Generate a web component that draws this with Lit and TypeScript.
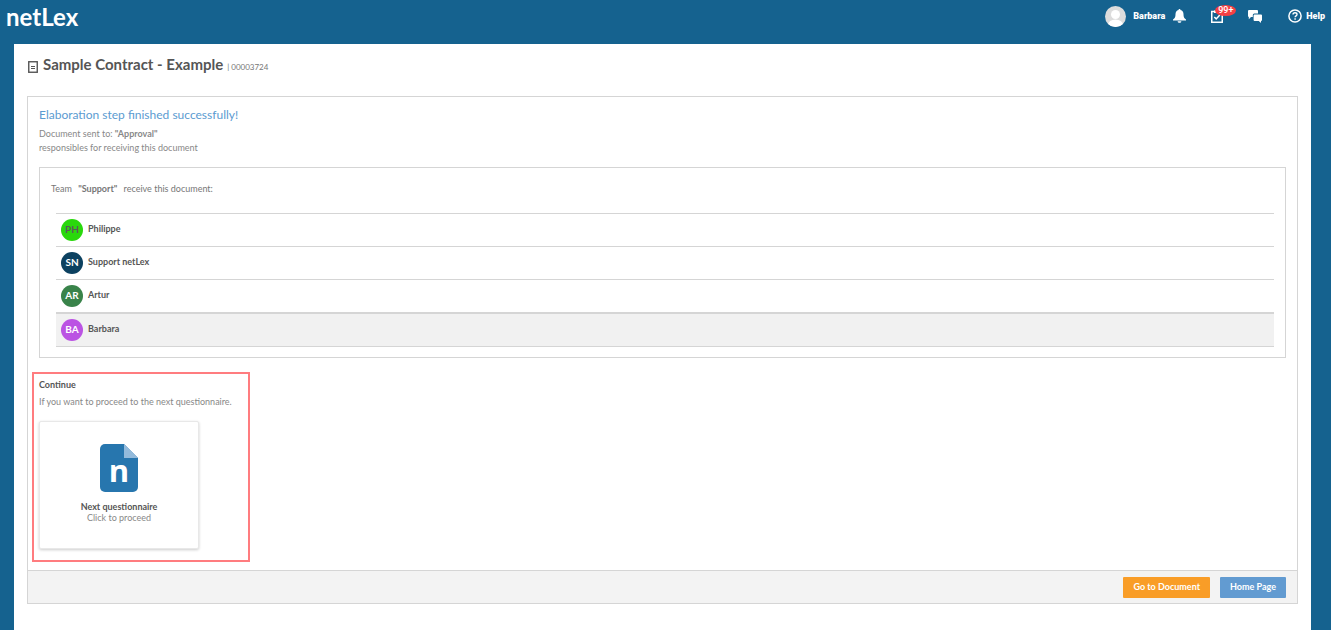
import { LitElement, css, html, svg } from 'lit'
import { customElement, property } from 'lit/decorators.js'
import { styleMap } from 'lit/directives/style-map.js'

interface Member {
    initials: string
    name: string
    color: string
    ink: string
    current?: boolean
}

const members: Member[] = [
    { initials: 'PH', name: 'Philippe', color: '#29d80c', ink: '#5a5a5a' },
    { initials: 'SN', name: 'Support netLex', color: '#0c4160', ink: '#fff' },
    { initials: 'AR', name: 'Artur', color: '#39834a', ink: '#fff' },
    { initials: 'BA', name: 'Barbara', color: '#bb53e3', ink: '#fff', current: true },
]

const documentMark = svg`
    <path fill="#2776ae" d="M5 0H24L38 14V43a5 5 0 0 1-5 5H5a5 5 0 0 1-5-5V5a5 5 0 0 1 5-5z"/>
    <path fill="#93badb" d="M24 0L38 14H24z"/>
`

@customElement('top-bar')
export class TopBar extends LitElement {
    @property() user = ''

    render() {
        return html`
      <header>
        <a class="logo" href="#">netLex</a>
        <nav>
            <a class="user" href="#">
                <svg width="21" height="21" viewBox="0 0 21 21"><defs><clipPath id="face"><circle cx="10.5" cy="10.5" r="10.5"/></clipPath></defs><g clip-path="url(#face)"><rect width="21" height="21" fill="#dcdcdc"/><circle cx="10.500" cy="8.500" r="4.500" fill="#fff"/><ellipse cx="10.500" cy="19" rx="7.500" ry="5.500" fill="#fff"/></g></svg>
                <span>${this.user}</span>
            </a>
            <button class="bell" aria-label="Notifications">
                <svg width="13" height="14" viewBox="0 0 13 14" fill="#fff"><path d="M6.500 0c.7 0 1 .4 1 1.100C9.500 1.600 10.500 3.200 10.500 5.200c0 2.800.6 4 2.500 5.300v.9H0v-.9C1.900 9.200 2.500 8 2.500 5.200c0-2 1-3.600 3-4.100C5.500.4 5.800 0 6.500 0z"/><path d="M4.600 12.200h3.800c-.2 1-.9 1.600-1.900 1.600s-1.700-.6-1.900-1.600z"/></svg>
            </button>
            <button class="tasks" aria-label="Tasks">
                <svg width="12" height="14" viewBox="0 0 12 14" fill="none" stroke="#fff"><rect x=".75" y="2.500" width="10.500" height="10.750" stroke-width="1.500"/><path fill="#fff" stroke="none" d="M3 1.500h2C5 .6 5.400.2 6 .2s1 .4 1 1.300h2V4H3z"/><path stroke-width="1.500" d="M3.300 8l1.900 1.900 3.600-3.800"/></svg>
                <span class="badge">99+</span>
            </button>
            <button class="chat" aria-label="Messages">
                <svg width="14" height="14" viewBox="0 0 14 14" fill="#fff"><path d="M1 1h8a1 1 0 0 1 1 1v2.500H6.300a1.500 1.500 0 0 0-1.500 1.500v2H3L.8 10.200V8H1a1 1 0 0 1-1-1V2a1 1 0 0 1 1-1z"/><path d="M6.600 5.500H13a1 1 0 0 1 1 1V11a1 1 0 0 1-1 1v2l-2.200-2H6.600a1 1 0 0 1-1-1V6.500a1 1 0 0 1 1-1z"/></svg>
            </button>
            <a class="help" href="#">
                <svg width="14" height="14" viewBox="0 0 14 14" fill="none" stroke="#fff"><circle cx="7" cy="7" r="6.100" stroke-width="1.500"/><path stroke-width="1.400" d="M5 5.600C5 4.400 5.800 3.700 7 3.700s2 .7 2 1.700c0 1.400-1.900 1.500-1.900 2.900"/><path stroke-width="1.400" d="M7.100 9.300v1.400"/></svg>
                <span>Help</span>
            </a>
        </nav>
      </header>
      `
    }

    static styles = css`
:host {
    display: block;
}

header {
    display: flex;
    justify-content: space-between;
    height: 44px;
    padding: 0 6px;
}

a {
    color: #fff;
    text-decoration: none;
}

.logo {
    font: 700 24px/34px Lato, "Open Sans", sans-serif;
}

nav {
    display: flex;
    align-items: center;
    height: 32px;
    font: 900 9px/14px Roboto, "Liberation Sans", sans-serif;
}

.user,
.help {
    display: flex;
    align-items: center;
}

.user {
    gap: 7px;
}

.help {
    gap: 4px;
    margin-left: 26px;
}

svg {
    display: block;
}

button {
    position: relative;
    padding: 0;
    border: 0;
    background: none;
    cursor: pointer;
}

.bell {
    margin-left: 8px;
}

.tasks {
    margin-left: 25px;
}

.chat {
    margin-left: 25px;
}

.badge {
    position: absolute;
    left: 4px;
    top: -4px;
    padding: 0 3px;
    border-radius: 50%;
    background: #f53f43;
    color: #fff;
    font: 500 9px/11px Roboto, "Liberation Sans", sans-serif;
}
    `
}

@customElement('team-list')
export class TeamList extends LitElement {
    @property() team = ''
    @property({ attribute: false }) members: Member[] = []

    render() {
        return html`
      <p>Team <b>"${this.team}"</b> receive this document:</p>
      <ul>
        ${this.members.map(m => html`
            <li class=${m.current ? 'current' : ''}>
                <span class="avatar" style=${styleMap({ background: m.color, color: m.ink })}>${m.initials}</span>
                <span class="name">${m.name}</span>
            </li>
        `)}
      </ul>
      `
    }

    static styles = css`
:host {
    display: block;
    padding: 14px 11px 10px;
    border: 1px solid #d5d5d5;
}

p {
    margin: 0 0 17px;
    color: #777;
    line-height: 14px;
}

p b {
    margin: 0 4px;
}

ul {
    margin: 0 0 0 5px;
    padding: 0;
    list-style: none;
}

li {
    display: flex;
    align-items: center;
    gap: 5px;
    height: 32px;
    padding: 0 5px;
    border-top: 1px solid #d5d5d5;
    color: #555;
    font-weight: 700;
}

li.current {
    border-top-width: 2px;
    border-bottom: 1px solid #d5d5d5;
    background: #f1f1f1;
}

.name {
    padding-bottom: 2px;
}

.avatar {
    width: 22px;
    height: 22px;
    border-radius: 50%;
    font-size: 10px;
    line-height: 21px;
    text-align: center;
}
    `
}

@customElement('app-root')
export class AppRoot extends LitElement {
    render() {
        return html`
      <top-bar user="Barbara"></top-bar>
      <main>
        <div class="title">
            <svg width="10" height="12" viewBox="0 0 10 12" fill="none" stroke="#555"><rect x=".75" y=".75" width="8.500" height="10.500" stroke-width="1.400"/><path d="M3 5.500h4M3 7.500h4"/></svg>
            <h1>Sample Contract - Example</h1>
            <small>| 00003724</small>
        </div>
        <div class="panel">
            <div class="content">
                <h2>Elaboration step finished successfully!</h2>
                <p>Document sent to: <b>"Approval"</b></p>
                <p>responsibles for receiving this document</p>
                <team-list team="Support" .members=${members}></team-list>
                <section>
                    <h3>Continue</h3>
                    <p>If you want to proceed to the next questionnaire.</p>
                    <button class="card">
                        <svg width="38" height="48" viewBox="0 0 38 48">${documentMark}<text x="19" y="38" text-anchor="middle">n</text></svg>
                        <strong>Next questionnaire</strong>
                        <span>Click to proceed</span>
                    </button>
                </section>
            </div>
            <footer>
                <button class="action document">Go to Document</button>
                <button class="action home">Home Page</button>
            </footer>
        </div>
      </main>
      `
    }

    static styles = css`
:host {
    display: flex;
    flex-direction: column;
    box-sizing: border-box;
    min-height: 100vh;
    background: #15628f;
    font: 9px/14px Lato, "Liberation Sans", sans-serif;
}

main {
    flex: 1;
    margin: 0 20px 0 14px;
    padding: 11px 13px 26px;
    background: #fff;
}

.title {
    display: flex;
    align-items: baseline;
    gap: 4px;
    height: 41px;
    padding-left: 1px;
    color: #777;
}

.title svg {
    position: relative;
    top: 3px;
    margin-right: 1px;
}

small {
    font-size: 8px;
}

h1,
h2,
h3,
p {
    margin: 0;
}

h1 {
    color: #555;
    font-size: 15px;
    line-height: 18px;
}

.panel {
    border: 1px solid #d5d5d5;
}

.content {
    padding: 9px 11px 8px;
}

h2 {
    margin-bottom: 4px;
    color: #5b9bd1;
    font-size: 12px;
    font-weight: 400;
    line-height: 17px;
}

p {
    color: #888;
}

team-list {
    margin-top: 12px;
}

section {
    box-sizing: border-box;
    width: fit-content;
    min-width: 218px;
    margin: 14px 0 0 -7px;
    padding: 4px 5px 11px;
    border: 2px solid #ff7c7f;
}

h3 {
    margin-bottom: 3px;
    color: #555;
    font-size: 9px;
    line-height: 14px;
}

.card {
    display: flex;
    flex-direction: column;
    align-items: center;
    width: 160px;
    margin-top: 12px;
    padding: 22px 8px 25px;
    border: 1px solid #e8e8e8;
    border-radius: 2px;
    background: #fff;
    box-shadow: 0 1px 3px rgba(0, 0, 0, .2);
    color: #888;
    font: inherit;
    line-height: 11px;
    cursor: pointer;
}

.card svg {
    margin-bottom: 9px;
}

.card text {
    fill: #fff;
    font: 700 31px "Open Sans", Lato, sans-serif;
}

.card strong {
    color: #555;
}

footer {
    display: flex;
    justify-content: flex-end;
    gap: 10px;
    padding: 6px 11px 5px;
    border-top: 1px solid #d5d5d5;
    background: #f3f3f3;
}

.action {
    height: 21px;
    padding: 0 10px 2px;
    border: 0;
    border-radius: 1px;
    color: #fff;
    font: 700 9px/14px Lato, "Liberation Sans", sans-serif;
    cursor: pointer;
}

.document {
    background: #f99d27;
}

.home {
    background: #629bd1;
}
    `
}
